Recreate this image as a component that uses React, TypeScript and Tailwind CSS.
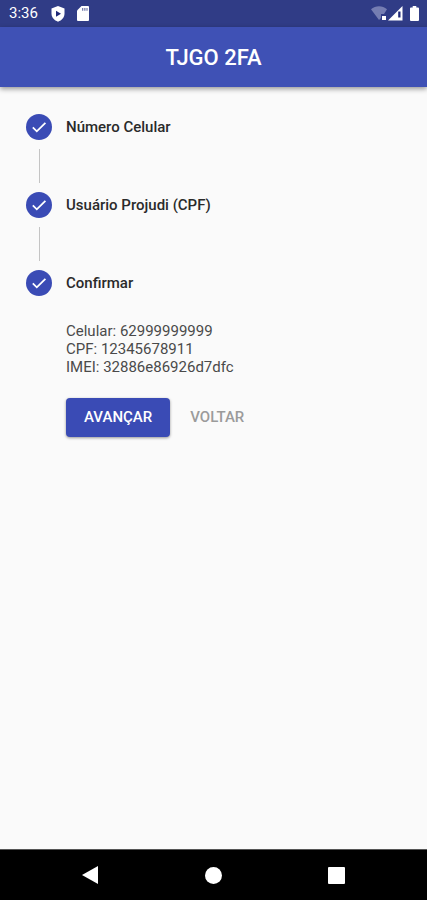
const steps = ["Número Celular", "Usuário Projudi (CPF)", "Confirmar"];

const details = [
  { label: "Celular", value: "62999999999" },
  { label: "CPF", value: "12345678911" },
  { label: "IMEI", value: "32886e86926d7dfc" },
];

function StatusBar() {
  return (
    <div className="flex h-[27px] shrink-0 items-center bg-[#303c86] pr-2 pl-[9px] text-white">
      <span className="text-[15px]">3:36</span>
      <svg className="ml-[13px] h-4 w-[14px]" viewBox="0 0 14 16" aria-hidden="true">
        <path d="M7 0 L13.5 2.5 V7.5 C13.5 11.5 10.8 14.3 7 15.7 C3.2 14.3 .5 11.5 .5 7.5 V2.5 Z" fill="#fff" />
        <path d="M5 4.7 V10.7 L10 7.7 Z" fill="#1f2878" />
      </svg>
      <svg className="ml-3 h-[15px] w-3" viewBox="0 0 12 15" aria-hidden="true">
        <path d="M4.5 0 H11 Q12 0 12 1 V14 Q12 15 11 15 H1 Q0 15 0 14 V4.5 Z" fill="#fff" />
        <path d="M5 2 H6.3 V4.7 H5 Z M7.2 2 H8.5 V4.7 H7.2 Z M9.4 2 H10.6 V4.7 H9.4 Z" fill="#777dac" />
      </svg>
      <div className="ml-auto flex items-center">
        <svg className="h-[15px] w-4" viewBox="0 0 16 15" aria-hidden="true">
          <path d="M0 3.3 C4.5 -.7 11.5 -.7 16 3.3 L13 8 H10 V12 L8 14 Z" fill="#757db2" />
          <path d="M11 10 H15 V14 H11 Z" fill="#fff" />
        </svg>
        <svg className="ml-px h-[15px] w-[15px]" viewBox="0 0 15 15" aria-hidden="true">
          <path d="M14.5 0 V14.5 H0 Z" fill="#fff" />
          <path d="M10.2 5.5 H12.5 V11.5 H10.2 Z" fill="#1f2878" />
        </svg>
        <svg className="ml-[7px] h-[15px] w-[9px]" viewBox="0 0 9 15" aria-hidden="true">
          <path d="M2.7 0 H6.3 V1.5 H8 Q9 1.5 9 2.5 V14 Q9 15 8 15 H1 Q0 15 0 14 V2.5 Q0 1.5 1 1.5 H2.7 Z" fill="#fff" />
        </svg>
      </div>
    </div>
  );
}

function StepMark() {
  return (
    <svg className="size-[26px]" viewBox="0 0 26 26" aria-hidden="true">
      <circle cx="13" cy="13" r="13" fill="#3a4bb5" />
      <path d="M6.8 13.4 L10.8 17.3 L19.4 8.9" fill="none" stroke="#fff" strokeWidth="1.8" />
    </svg>
  );
}

function NavBar() {
  return (
    <nav className="flex h-[51px] shrink-0 border-t border-[#555] bg-black px-[29px] text-white">
      <button type="button" aria-label="Back" className="flex flex-1 items-center justify-center">
        <svg className="h-[18px] w-[17px]" viewBox="0 0 17 18" aria-hidden="true">
          <path d="M0 9 L16 0 V18 Z" fill="currentColor" />
        </svg>
      </button>
      <button type="button" aria-label="Home" className="flex flex-1 items-center justify-center">
        <span className="size-[17px] rounded-full bg-white" />
      </button>
      <button type="button" aria-label="Overview" className="flex flex-1 items-center justify-center">
        <span className="size-[17px] rounded-[1px] bg-white" />
      </button>
    </nav>
  );
}

export default function App() {
  return (
    <div className="flex min-h-screen flex-col bg-[#fafafa] font-[Roboto,sans-serif]">
      <StatusBar />
      <header className="flex h-[60px] shrink-0 items-center justify-center bg-[#3f51b5] shadow-[0_2px_5px_rgba(0,0,0,0.4)]">
        <h1 className="text-[22px] font-medium text-white">TJGO 2FA</h1>
      </header>
      <main className="flex-1 px-[26px] pt-[27px]">
        <ol>
          {steps.map((step, index) => (
            <li key={step}>
              <div className="flex items-center gap-[14px]">
                <StepMark />
                <span className="text-[15px] font-medium text-[#2a2a2a]">{step}</span>
              </div>
              {index < steps.length - 1 && (
                <div className="my-[9px] ml-[13px] h-[34px] w-px bg-[#c4c4c4]" />
              )}
            </li>
          ))}
        </ol>
        <section className="mt-[26px] ml-10">
          <div className="text-[15px] leading-[18px] text-[#4a4a4a]">
            {details.map((detail) => (
              <p key={detail.label}>
                {detail.label}: {detail.value}
              </p>
            ))}
          </div>
          <div className="mt-[22px] flex gap-5">
            <button
              type="button"
              className="h-[39px] rounded-[4px] bg-[#3a4bb5] px-[18px] text-[15px] font-medium text-white shadow-[0_1px_3px_rgba(0,0,0,0.4)]"
            >
              AVANÇAR
            </button>
            <button type="button" className="text-[15px] font-medium text-[#9b9b9b]">
              VOLTAR
            </button>
          </div>
        </section>
      </main>
      <NavBar />
    </div>
  );
}
